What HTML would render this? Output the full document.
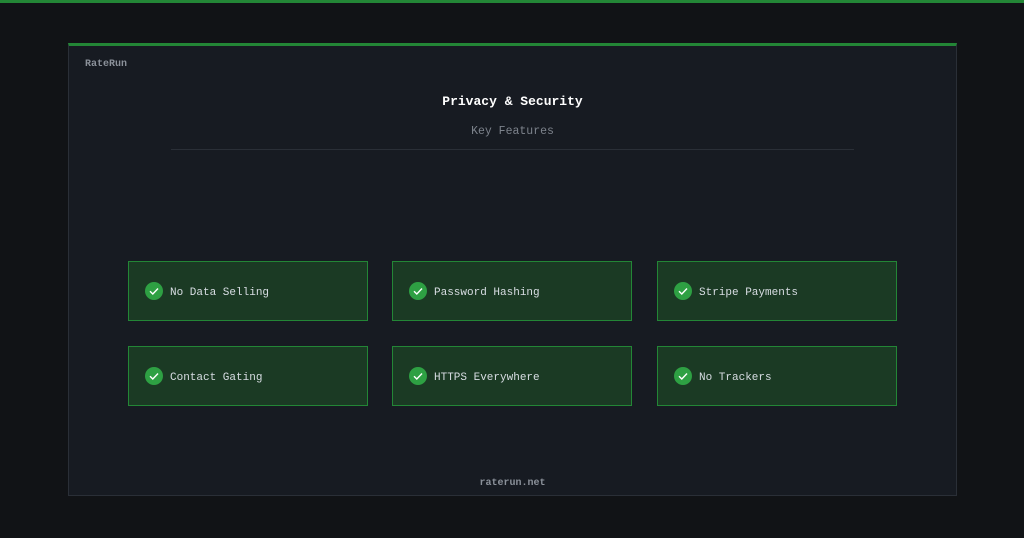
<!DOCTYPE html>
<html><head><style>
*{margin:0;padding:0;box-sizing:border-box}
body{width:1024px;height:538px;background:#111316;font-family:"Liberation Mono",monospace;position:relative;overflow:hidden}
.top{position:absolute;left:0;top:0;width:1024px;height:3px;background:#238636}
.card{position:absolute;left:68px;top:43px;width:889px;height:453px;background:#171b22;border:1px solid #2a2f37;border-top:3px solid #238636}
.brand{position:absolute;left:16px;top:13px;font-size:10px;font-weight:bold;color:#8b919a}
.title{position:absolute;left:0;width:100%;top:48px;text-align:center;font-size:13px;font-weight:bold;color:#fff}
.sub{position:absolute;left:0;width:100%;top:79px;text-align:center;font-size:11.5px;color:#7d838c}
.hr{position:absolute;left:102px;top:103px;width:683px;height:1px;background:#2a2f37}
.f{position:absolute;width:240px;height:60px;background:#1b3a24;border:1px solid #238636;display:flex;align-items:center;padding-left:16px;color:#d8dde3;font-size:11px}
.f svg{margin-right:7px}
.f span{position:relative;top:2px}
.foot{position:absolute;left:0;width:100%;top:432px;text-align:center;font-size:10px;font-weight:bold;color:#8b919a}
</style></head><body>
<div class="top"></div>
<div class="card">
<div class="brand">RateRun</div>
<div class="title">Privacy &amp; Security</div>
<div class="sub">Key Features</div>
<div class="hr"></div>
<div class="f" style="left:59px;top:215px"><svg width="18" height="18" viewBox="0 0 18 18"><circle cx="9" cy="9" r="9" fill="#2ea043"/><path d="M5 9.2l2.8 2.8L13 6.5" stroke="#fff" stroke-width="1.4" fill="none"/></svg><span>No Data Selling</span></div>
<div class="f" style="left:323px;top:215px"><svg width="18" height="18" viewBox="0 0 18 18"><circle cx="9" cy="9" r="9" fill="#2ea043"/><path d="M5 9.2l2.8 2.8L13 6.5" stroke="#fff" stroke-width="1.4" fill="none"/></svg><span>Password Hashing</span></div>
<div class="f" style="left:588px;top:215px"><svg width="18" height="18" viewBox="0 0 18 18"><circle cx="9" cy="9" r="9" fill="#2ea043"/><path d="M5 9.2l2.8 2.8L13 6.5" stroke="#fff" stroke-width="1.4" fill="none"/></svg><span>Stripe Payments</span></div>
<div class="f" style="left:59px;top:300px"><svg width="18" height="18" viewBox="0 0 18 18"><circle cx="9" cy="9" r="9" fill="#2ea043"/><path d="M5 9.2l2.8 2.8L13 6.5" stroke="#fff" stroke-width="1.4" fill="none"/></svg><span>Contact Gating</span></div>
<div class="f" style="left:323px;top:300px"><svg width="18" height="18" viewBox="0 0 18 18"><circle cx="9" cy="9" r="9" fill="#2ea043"/><path d="M5 9.2l2.8 2.8L13 6.5" stroke="#fff" stroke-width="1.4" fill="none"/></svg><span>HTTPS Everywhere</span></div>
<div class="f" style="left:588px;top:300px"><svg width="18" height="18" viewBox="0 0 18 18"><circle cx="9" cy="9" r="9" fill="#2ea043"/><path d="M5 9.2l2.8 2.8L13 6.5" stroke="#fff" stroke-width="1.4" fill="none"/></svg><span>No Trackers</span></div>
<div class="foot">raterun.net</div>
</div>
</body></html>
